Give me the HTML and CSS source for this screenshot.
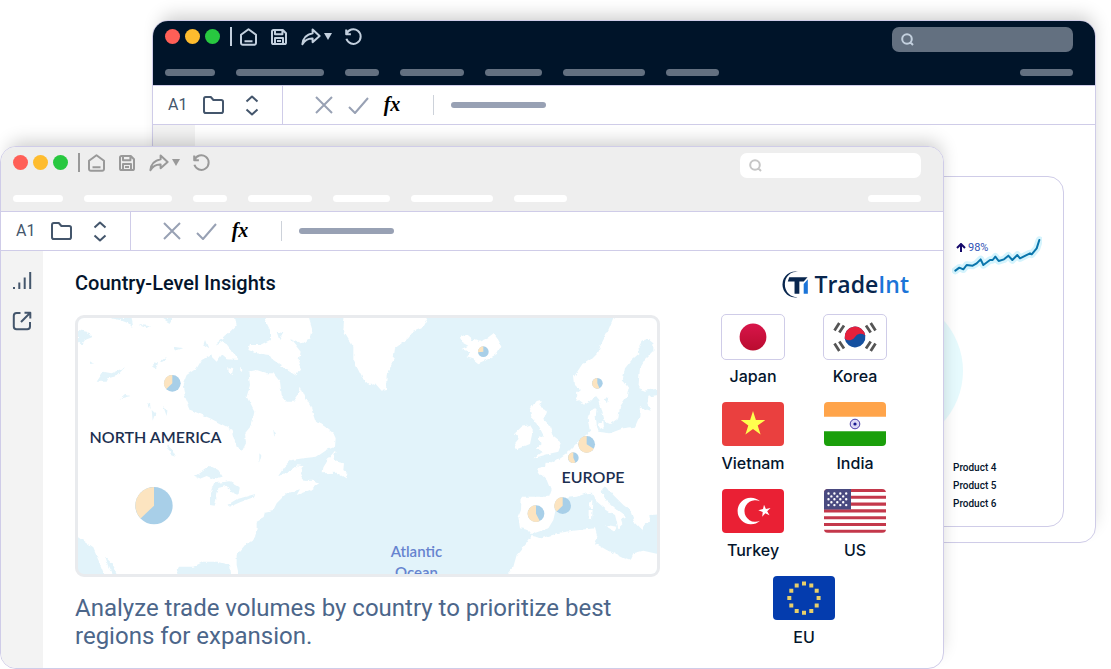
FILE: index.html
```html
<!DOCTYPE html>
<html lang="en">
<head>
<meta charset="utf-8">
<meta name="viewport" content="width=device-width, initial-scale=1">
<title>TradeInt – Country-Level Insights</title>
<link rel="stylesheet" href="styles.css">
</head>
<body>
<svg class="sprite" aria-hidden="true">
  <symbol id="i-home" viewBox="0 0 17 18"><path d="M1 6.8 8.5 1.2 16 6.8V15a1.8 1.8 0 0 1-1.8 1.8H2.8A1.8 1.8 0 0 1 1 15ZM4.5 13.2h8"/></symbol>
  <symbol id="i-save" viewBox="0 0 16 16"><path d="M1 2.6C1 1.7 1.7 1 2.6 1h9.2L15 4.2v9.2c0 .9-.7 1.6-1.6 1.6H2.6C1.7 15 1 14.3 1 13.4ZM4 1v4.2h7.4V1M4 15V9h8v6M6 12h4"/></symbol>
  <symbol id="i-share" viewBox="0 0 20 18"><path d="M11.6 1.6 18.6 8l-7 6.2v-3.6C7 10.400 3.700 12.500 1.400 16.200 2 11 4.600 6.600 11.600 5.300Z"/></symbol>
  <symbol id="i-undo" viewBox="0 0 17 17"><path d="M1.200 1.500v4.700h4.700M1.500 6A7.300 7.300 0 1 1 1.400 10.800"/></symbol>
  <symbol id="i-search" viewBox="0 0 13 13"><path d="M10.800 6a4.800 4.800 0 1 1-9.600 0 4.800 4.800 0 0 1 9.600 0ZM9.300 9.300 12 12"/></symbol>
  <symbol id="i-folder" viewBox="0 0 21 18"><path d="M1 3c0-1.200.6-2 1.800-2h5l2.600 3h7.800C19.400 4 20 4.700 20 5.800v9.400c0 1.100-.7 1.800-1.800 1.800H2.800C1.700 17 1 16.300 1 15.200Z"/></symbol>
  <symbol id="i-updown" viewBox="0 0 14 21"><path d="M1.500 6.500 7 1.500l5.500 5M1.500 14.500 7 19.500l5.500-5"/></symbol>
  <symbol id="i-close" viewBox="0 0 18 18"><path d="m1 1 16 16M17 1 1 17"/></symbol>
  <symbol id="i-check" viewBox="0 0 21 17"><path d="m1 10 6 6L20 1"/></symbol>
  <symbol id="i-bars" viewBox="0 0 20 19"><path d="M2 16v2M7.300 11.500V18M12.700 6.500V18M18.200 1v17"/></symbol>
  <symbol id="i-external" viewBox="0 0 20 20"><path d="M8.500 2H4.600A2.800 2.800 0 0 0 1.800 4.800v10.600a2.800 2.800 0 0 0 2.800 2.800h10.600a2.800 2.800 0 0 0 2.800-2.800V11M12.500 1.800h5.800v5.800M18 2 9 11"/></symbol>
</svg>

<main class="desktop">
  <section class="window window--back" aria-label="Product window">
    <header class="titlebar">
      <div class="titlebar__row">
        <div class="tools">
          <span class="dot dot--red"></span><span class="dot dot--yellow"></span><span class="dot dot--green"></span>
          <span class="tools__rule"></span>
          <button class="tool tool--home" aria-label="Home"><svg><use href="#i-home"/></svg></button>
          <button class="tool tool--save" aria-label="Save"><svg><use href="#i-save"/></svg></button>
          <button class="tool tool--share" aria-label="Share"><svg><use href="#i-share"/></svg><span class="caret"></span></button>
          <button class="tool tool--undo" aria-label="Undo"><svg><use href="#i-undo"/></svg></button>
        </div>
        <label class="search"><svg><use href="#i-search"/></svg><input type="search" aria-label="Search"></label>
      </div>
      <div class="menu" aria-hidden="true">
        <span class="pill pill--50"></span><span class="pill pill--88"></span><span class="pill pill--34"></span><span class="pill pill--64"></span><span class="pill pill--57"></span><span class="pill pill--82"></span><span class="pill pill--53"></span><span class="pill pill--53 pill--end"></span>
      </div>
    </header>
    <div class="cellbar">
      <div class="cellbar__cell">
        <span class="cellbar__name">A1</span>
        <button class="tool tool--folder" aria-label="Open folder"><svg><use href="#i-folder"/></svg></button>
        <button class="tool tool--updown" aria-label="Change cell"><svg><use href="#i-updown"/></svg></button>
      </div>
      <div class="cellbar__formula">
        <button class="tool tool--close" aria-label="Cancel"><svg><use href="#i-close"/></svg></button>
        <button class="tool tool--check" aria-label="Accept"><svg><use href="#i-check"/></svg></button>
        <button class="fx" aria-label="Insert function">fx</button>
        <span class="cellbar__value"></span>
      </div>
    </div>
    <div class="body">
      <nav class="rail" aria-label="Product views">
        <button class="tool tool--bars" aria-label="Charts"><svg><use href="#i-bars"/></svg></button>
        <button class="tool tool--external" aria-label="Open"><svg><use href="#i-external"/></svg></button>
      </nav>
      <div class="products">
        <h2 class="title">Product Category Insights</h2>
        <div class="card">
          <div class="kpi">
            <svg class="kpi__line" viewBox="96 228 270 120" aria-hidden="true">
              <path class="kpi__glow" d="M106 332 118 323 130 328 140 315 158 317 170 310 182 298 190 315 210 300 218 300 226 290 236 303 252 298 265 287 277 300 292 285 300 295 330 280 335 283 350 265 358 240"/>
              <path class="kpi__stroke" d="M106 332 118 323 130 328 140 315 158 317 170 310 182 298 190 315 210 300 218 300 226 290 236 303 252 298 265 287 277 300 292 285 300 295 330 280 335 283 350 265 358 240"/>
            </svg>
            <p class="kpi__text"><svg class="kpi__arrow" viewBox="0 0 10 10" aria-hidden="true"><path d="M5 9V1.500M1 5l4-4 4 4"/></svg>98%</p>
          </div>
          <div class="disc"></div>
          <ul class="legend"><li>Product 4</li><li>Product 5</li><li>Product 6</li></ul>
        </div>
      </div>
    </div>
  </section>

  <section class="window window--front" aria-label="Country window">
    <header class="titlebar">
      <div class="titlebar__row">
        <div class="tools">
          <span class="dot dot--red"></span><span class="dot dot--yellow"></span><span class="dot dot--green"></span>
          <span class="tools__rule"></span>
          <button class="tool tool--home" aria-label="Home"><svg><use href="#i-home"/></svg></button>
          <button class="tool tool--save" aria-label="Save"><svg><use href="#i-save"/></svg></button>
          <button class="tool tool--share" aria-label="Share"><svg><use href="#i-share"/></svg><span class="caret"></span></button>
          <button class="tool tool--undo" aria-label="Undo"><svg><use href="#i-undo"/></svg></button>
        </div>
        <label class="search"><svg><use href="#i-search"/></svg><input type="search" aria-label="Search"></label>
      </div>
      <div class="menu" aria-hidden="true">
        <span class="pill pill--50"></span><span class="pill pill--88"></span><span class="pill pill--34"></span><span class="pill pill--64"></span><span class="pill pill--57"></span><span class="pill pill--82"></span><span class="pill pill--53"></span><span class="pill pill--53 pill--end"></span>
      </div>
    </header>
    <div class="cellbar">
      <div class="cellbar__cell">
        <span class="cellbar__name">A1</span>
        <button class="tool tool--folder" aria-label="Open folder"><svg><use href="#i-folder"/></svg></button>
        <button class="tool tool--updown" aria-label="Change cell"><svg><use href="#i-updown"/></svg></button>
      </div>
      <div class="cellbar__formula">
        <button class="tool tool--close" aria-label="Cancel"><svg><use href="#i-close"/></svg></button>
        <button class="tool tool--check" aria-label="Accept"><svg><use href="#i-check"/></svg></button>
        <button class="fx" aria-label="Insert function">fx</button>
        <span class="cellbar__value"></span>
      </div>
    </div>
    <div class="body">
      <nav class="rail" aria-label="Country views">
        <button class="tool tool--bars" aria-label="Charts"><svg><use href="#i-bars"/></svg></button>
        <button class="tool tool--external" aria-label="Open"><svg><use href="#i-external"/></svg></button>
      </nav>
      <div class="countries">
        <div class="insight">
          <h1 class="title">Country-Level Insights</h1>
          <div class="map">
            <svg class="map__art" viewBox="24 24 1737 768" aria-hidden="true">
              <defs>
                <filter id="coast" x="-5%" y="-5%" width="110%" height="110%">
                  <feTurbulence type="fractalNoise" baseFrequency=".06" numOctaves="2" seed="4"/>
                  <feDisplacementMap in="SourceGraphic" scale="12" xChannelSelector="R" yChannelSelector="G"/>
                </filter>
              </defs>
              <g filter="url(#coast)">
                <g class="land">
                  <path d="M0 0H490L500 45 470 75 440 100 432 130 395 150 380 175 350 195 338 225 345 260 362 300 385 310 420 325 470 350 485 360 490 380 500 410 515 425 528 400 525 370 545 345 553 305 530 260 540 225 535 185 560 180 590 190 610 190 630 215 635 255 650 275 670 275 685 255 692 230 705 260 722 290 735 330 765 350 790 370 797 385 795 410 770 420 740 440 700 445 665 450 640 475 625 498 655 485 685 462 705 470 690 490 700 512 730 510 747 520 720 540 680 555 690 538 650 550 620 580 610 600 585 605 580 625 560 635 560 655 555 685 525 705 500 735 500 765 510 810H485L480 765 440 755 400 755 370 770 330 770 308 810H150L125 760 105 740 115 770 135 810H110L85 750 70 715 15 675Z"/>
                  <path d="M797 420 780 440 760 470 758 490 800 488 827 505 832 490 820 480 822 460 800 455 790 448Z"/>
                  <path d="M570 0H710L728 60 722 85 695 100 660 85 692 125 685 155 692 175 680 195 640 170 610 150 600 135 560 130 535 120 540 105 570 105 600 90 600 60 590 40Z"/>
                  <path d="M435 105 460 92 485 125 505 150 470 148 455 135 440 155 425 140ZM472 172 490 175 485 195 473 185ZM510 172 520 175 512 190Z"/>
                  <path d="M825 0 820 60 850 110 850 150 875 200 898 222 915 220 935 242 948 240 950 195 960 175 970 150 975 115 1015 85 1030 65 1055 55 1085 0Z"/>
                  <path d="M1170 82 1190 72 1205 85 1202 95 1215 90 1230 95 1255 85 1272 72 1285 90 1294 107 1280 132 1255 147 1225 160 1210 148 1190 142 1200 127 1175 117 1195 107 1175 97Z"/>
                  <path d="M1640 0H1790V232L1725 242 1705 235 1710 175 1725 150 1750 125 1750 100 1735 88 1715 92 1705 110 1708 130 1685 150 1665 175 1658 210 1675 235 1670 260 1650 290 1645 325 1620 342 1605 335 1595 300 1588 270 1578 258 1560 275 1540 285 1520 270 1518 250 1530 240 1515 225 1512 200 1535 165 1560 150 1580 130 1595 100 1615 60Z"/>
                  <path d="M1790 250 1735 260 1732 280 1742 302 1710 292 1708 320 1695 350 1660 355 1620 370 1585 365 1580 345 1577 318 1580 294 1560 302 1553 325 1560 365 1540 380 1520 400 1495 425 1460 450 1445 460 1430 458 1428 468 1400 475 1410 490 1430 510 1442 540 1435 560 1355 560 1353 600 1345 620 1350 655 1375 660 1385 672 1405 665 1435 655 1450 630 1458 595 1480 565 1520 560 1550 550 1565 548 1575 570 1610 600 1635 615 1645 655 1660 640 1655 625 1668 620 1640 600 1610 575 1595 545 1605 525 1630 555 1660 585 1680 600 1695 640 1720 665 1725 640 1740 635 1738 615 1790 612Z"/>
                  <path d="M1280 830 1330 770 1340 735 1370 700 1385 678 1415 685 1460 670 1510 662 1575 655 1582 680 1575 700 1610 720 1660 745 1680 752 1690 730 1720 722 1790 738V830Z"/>
                  <path d="M1395 275 1415 270 1410 290 1432 300 1420 330 1440 350 1450 380 1475 400 1465 425 1435 432 1390 445 1415 425 1397 415 1415 400 1405 385 1420 375 1402 340 1385 325 1380 300Z"/>
                  <path d="M1355 350 1380 345 1389 360 1380 402 1340 418 1335 400 1347 385 1335 370Z"/>
                  <path d="M1605 645 1642 650 1636 664ZM1558 576 1567 570 1566 595 1559 594ZM1556 600 1568 600 1566 628 1556 626ZM1585 338 1600 332 1602 352 1590 356Z"/>
                </g>
                <g class="lake">
                  <path d="M375 500 400 482 420 468 445 480 458 500 430 507 410 498 390 506ZM432 520 480 514 510 530 505 556 482 545 470 527 445 534 440 560 434 587 420 585 420 550ZM472 585 500 568 556 552 550 562 510 577 480 590Z"/>
                  <path d="M80 215 100 185 125 190 165 172 140 198 115 205 110 215ZM24 60 50 65 66 82 45 90 35 105 24 95ZM148 270 165 255 185 258 160 264ZM120 24H185L190 55 175 40 150 30ZM250 157 264 160 258 175 250 170ZM270 155 290 140 282 158ZM232 280 240 275 242 298ZM280 290 292 300 290 318ZM245 300 256 310 248 332ZM290 405 305 415 318 440 305 435ZM275 24 310 28 300 40ZM620 65 640 70 628 90ZM60 152 72 160 62 162ZM310 110 340 115 315 122ZM205 45 240 48 230 54ZM405 90 415 115 400 105ZM610 362 618 370 612 380ZM568 430 574 436 568 458ZM1602 265 1615 262 1610 280Z"/>
                  <path d="M625 498 650 470 690 450 720 458 740 445 775 425 770 455 755 480 745 512 705 512 690 490 702 468 680 466 655 485Z"/>
                </g>
              </g>
              <g class="pies">
                <g transform="translate(307 220) scale(25)"><circle r="1"/><path d="M0 0V-1A1 1 0 0 0-.72.69Z"/></g>
                <g transform="translate(252 587) scale(56)"><circle r="1"/><path d="M0 0V-1A1 1 0 0 0-.72.69Z"/></g>
                <g transform="translate(1240 125) scale(16)"><circle r="1"/><path d="M0 0V-1A1 1 0 0 0-1 .1Z"/></g>
                <g transform="translate(1582 220) scale(16)"><circle r="1"/><path d="M0 0V-1A1 1 0 1 0 .4.92Z"/></g>
                <g transform="translate(1550 403) scale(25)"><circle r="1"/><path d="M0 0V-1A1 1 0 1 0 .85.53Z"/></g>
                <g transform="translate(1510 443) scale(16)"><circle r="1"/><path d="M0 0V-1A1 1 0 1 0 .4.92Z"/></g>
                <g transform="translate(1398 611) scale(25)"><circle r="1"/><path d="M0 0V-1A1 1 0 1 0 .45.89Z"/></g>
                <g transform="translate(1478 587) scale(25)"><circle r="1"/><path d="M0 0V-1A1 1 0 0 0-.72.69Z"/></g>
              </g>
            </svg>
            <span class="map__label map__label--na">NORTH AMERICA</span>
            <span class="map__label map__label--eu">EUROPE</span>
            <span class="map__label map__label--sea">Atlantic<br>Ocean</span>
          </div>
          <p class="lead">Analyze trade volumes by country to prioritize best regions for expansion.</p>
        </div>
        <aside class="partners">
          <div class="logo">
            <svg class="logo__mark" viewBox="0 0 28 28" aria-hidden="true">
              <path class="logo__navy" d="M17 .8A13.300 13.300 0 0 0 .5 14 13.300 13.300 0 0 0 16 27.300 13 13 0 0 1 3 14 12.600 12.600 0 0 1 17 .8Z"/>
              <path class="logo__navy" d="M7.500 6.500H26.500L22.500 11H18V23.500H13V11H6Z"/>
              <path class="logo__blue" d="M22.500 13.500 26.800 8.500V23.500H22.500Z"/>
            </svg>
            <span class="logo__text">Trade<b>Int</b></span>
          </div>
          <ul class="flags">
            <li class="flag"><span class="flag__frame flag__frame--lined"><svg viewBox="0 0 62 44" aria-hidden="true"><defs><linearGradient id="jp" x2="0" y2="1"><stop stop-color="#d8154a"/><stop offset="1" stop-color="#ba0c2f"/></linearGradient></defs><circle cx="31" cy="22" r="13.400" fill="url(#jp)"/></svg></span>Japan</li>
            <li class="flag"><span class="flag__frame flag__frame--lined"><svg viewBox="0 0 62 44" aria-hidden="true"><g transform="rotate(-8 31 22)"><circle cx="31" cy="22" r="10.400" fill="#1450a0"/><path d="M20.600 22a10.400 10.400 0 0 1 20.800 0 6.500 6.500 0 0 0-10.400 0 6.500 6.500 0 0 1-10.400 0Z" fill="#e6203c"/></g><path stroke="#555" stroke-width="2.800" d="m10.500 15.500 4.800-7.500M15.300 17.500l4.700-7M51.500 15.500 46.700 8M46.700 17.500l-4.700-7M10.500 28.500l4.800 7.500M15.300 26.500l4.700 7M51.500 28.500 46.700 36M46.700 26.500l-4.700 7"/></svg></span>Korea</li>
            <li class="flag"><span class="flag__frame"><svg viewBox="0 0 62 44" aria-hidden="true"><path fill="#ea403f" d="M0 0h62v44H0z"/><path fill="#fffe4e" d="m31 9 2.900 9 9.400.1-7.600 5.500 2.900 9L31 27l-7.600 5.600 2.900-9-7.600-5.500 9.400-.1Z"/></svg></span>Vietnam</li>
            <li class="flag"><span class="flag__frame"><svg viewBox="0 0 62 44" aria-hidden="true"><path fill="#fff" d="M0 0h62v44H0z"/><path fill="#ffa44a" d="M0 0h62v14.700H0z"/><path fill="#1a9f0b" d="M0 29.300h62V44H0z"/><circle cx="31" cy="22" r="4.800" fill="#dcd9f5" stroke="#4a3fa8"/><circle cx="31" cy="22" r="1.600" fill="#181a8f"/></svg></span>India</li>
            <li class="flag"><span class="flag__frame"><svg viewBox="0 0 62 44" aria-hidden="true"><path fill="#ea2034" d="M0 0h62v44H0z"/><path fill="#fff" d="M38 12.300A13.300 13.300 0 1 0 38 31.700 10.800 10.800 0 1 1 38 12.300ZM42 15.700l1.900 4.200 4.600-.8-3.300 3.200 2.300 4-4.200-2-3.100 3.500.5-4.700-4.400-1.900 4.700-1.100Z"/></svg></span>Turkey</li>
            <li class="flag"><span class="flag__frame"><svg viewBox="0 0 62 44" aria-hidden="true"><path fill="#fff" d="M0 0h62v44H0z"/><path stroke="#c4384b" stroke-width="3.100" d="M0 1.500h62M0 8.300h62M0 15.100h62M0 21.900h62M0 28.700h62M0 35.500h62M0 42.300h62"/><path fill="#494a80" d="M0 0h27v20.500H0z"/><path fill="none" stroke="#fff" stroke-width="2.400" stroke-linecap="round" stroke-dasharray="0 5.900" d="M4.500 4.500H25M7.400 7.400H24M4.500 10.300H25M7.400 13.200H24M4.500 16.100H25"/></svg></span>US</li>
            <li class="flag flag--wide"><span class="flag__frame"><svg viewBox="0 0 62 44" aria-hidden="true"><path fill="#043cae" d="M0 0h62v44H0z"/><path fill="#e9cf6a" d="M29 5.500h4v4h-4zM36.300 7.400h4v4h-4zM41.700 12.800h4v4h-4zM43.600 20.100h4v4h-4zM41.700 27.500h4v4h-4zM36.300 32.900h4v4h-4zM29 34.800h4v4h-4zM21.700 32.900h4v4h-4zM16.300 27.500h4v4h-4zM14.300 20.100h4v4h-4zM16.300 12.800h4v4h-4zM21.700 7.400h4v4h-4z"/></svg></span>EU</li>
          </ul>
        </aside>
      </div>
    </div>
  </section>
</main>
</body>
</html>
```
FILE: styles.css
```css
* { box-sizing: border-box; }
html, body { margin: 0; background: #fff; }
body { font-family: Roboto, "Liberation Sans", sans-serif; color: #04152c; }
h1, h2, p, ul { margin: 0; padding: 0; }
ul { list-style: none; }
svg { display: block; }
button { margin: 0; padding: 0; border: 0; background: none; font: inherit; color: inherit; cursor: pointer; }
.sprite { position: absolute; width: 0; height: 0; }

/* Both windows share one grid cell and overlap through their margins. */
.desktop { display: grid; align-items: start; overflow: hidden; }
.window {
  grid-area: 1 / 1;
  min-width: 0;
  border: 1px solid #cfcce8;
  border-radius: 16px;
  background: #fff;
  box-shadow: 3px -10px 18px -6px rgba(0, 0, 0, .2);
}
.window--back { margin: 20px 15px 0 152px; }
.window--front { margin: 146px 167px 0 0; }

.titlebar {
  padding: 6px 22px 9px 12px;
  border-bottom: 1px solid #cfcce8;
  border-radius: 15px 15px 0 0;
}
.window--back .titlebar { background: #001429; color: #c3d0de; }
.window--front .titlebar { background: #eee; color: #999; }
.titlebar__row { display: flex; justify-content: space-between; align-items: flex-start; }
.tools { display: flex; align-items: center; height: 19px; }
.dot { width: 15px; height: 15px; margin-right: 5px; border-radius: 50%; }
.dot--red { background: #ff5f57; }
.dot--yellow { background: #febc2e; }
.dot--green { background: #28c840; }
.tools__rule { width: 2px; height: 19px; margin: 0 8px 0 5px; background: currentColor; }

.tool { display: flex; align-items: center; }
.tool svg { fill: none; stroke: currentColor; stroke-width: 2; stroke-linejoin: round; }
.tool--home svg { width: 17px; height: 18px; }
.tool--save { margin-left: 14px; }
.tool--save svg { width: 16px; height: 16px; }
.tool--share { margin-left: 14px; }
.tool--share svg { width: 20px; height: 18px; }
.tool--undo { margin-left: 13px; }
.tool--undo svg { width: 17px; height: 17px; }
.caret {
  margin-left: 3px;
  border: solid transparent;
  border-width: 7px 4px 0;
  border-top-color: currentColor;
}

.search {
  display: flex;
  align-items: center;
  width: 181px;
  height: 25px;
  padding: 0 9px;
  border-radius: 7px;
  background: #fff;
}
.window--back .search { background: #637080; }
.search svg { flex: none; width: 13px; height: 13px; fill: none; stroke: #c6c6c6; stroke-width: 2; }
.window--back .search svg { stroke: #c3d0de; }
.search input { flex: 1; min-width: 0; height: 21px; padding: 0 6px; border: 0; outline: 0; background: none; font: inherit; font-size: 12px; color: inherit; }

.menu { display: flex; gap: 21px; margin-top: 17px; }
.pill { height: 7px; border-radius: 4px; background: #fff; }
.window--back .pill { background: #637080; }
.pill--50 { width: 50px; }
.pill--88 { width: 88px; }
.pill--34 { width: 34px; }
.pill--64 { width: 64px; }
.pill--57 { width: 57px; }
.pill--82 { width: 82px; }
.pill--53 { width: 53px; }
.pill--end { margin-left: auto; }

.cellbar { display: flex; height: 39px; border-bottom: 1px solid #cfcce8; color: #44566c; }
.cellbar__cell { display: flex; align-items: center; width: 130px; padding-left: 15px; border-right: 1px solid #cfcce8; }
.cellbar__name { width: 18px; font-size: 16px; line-height: 20px; }
.tool--folder { margin-left: 17px; }
.tool--folder svg { width: 21px; height: 18px; }
.tool--updown { margin-left: 21px; }
.tool--updown svg { width: 14px; height: 21px; }
.cellbar__formula { display: flex; align-items: center; padding-left: 32px; color: #98a1b4; }
.tool--close svg { width: 18px; height: 18px; }
.tool--check { margin-left: 15px; }
.tool--check svg { width: 21px; height: 17px; }
.fx { width: 20px; margin-left: 13px; padding-bottom: 3px; font: italic bold 20px/24px "Liberation Serif", serif; color: #000; }
.cellbar__value { display: flex; align-items: center; height: 20px; margin-left: 31px; padding-left: 17px; border-left: 1px solid #cdd2da; }
.cellbar__value::before { content: ""; width: 95px; height: 6px; border-radius: 3px; background: #98a1b4; }

.body { display: flex; }
.rail { flex: none; display: flex; flex-direction: column; align-items: center; gap: 21px; width: 42px; padding-top: 20px; background: #f3f3f3; border-radius: 0 0 0 15px; color: #44566c; }
.tool--bars svg { width: 20px; height: 19px; }
.tool--external svg { width: 20px; height: 20px; }
.title { font-size: 20px; line-height: 28px; font-weight: 500; }

.products { flex: 1; min-width: 0; padding: 15px 31px 15px 32px; }
.card {
  display: flex;
  flex-direction: column;
  align-items: flex-end;
  margin-top: 8px;
  padding: 59px 23px 13px;
  border: 1px solid #cfcce8;
  border-radius: 16px;
}
.kpi { display: grid; width: 88px; }
.kpi > * { grid-area: 1 / 1; }
.kpi__line { width: 90px; height: 40px; fill: none; stroke-linejoin: round; stroke-linecap: round; }
.kpi__glow { stroke: #d5f4fd; stroke-width: 22; }
.kpi__stroke { stroke: #0a75ac; stroke-width: 6; }
.kpi__text { display: flex; align-items: center; gap: 2px; height: 14px; margin: 5px 0 0 4px; font-size: 11px; line-height: 14px; font-weight: 400; color: #2f52b5; }
.kpi__arrow { width: 10px; height: 10px; fill: none; stroke: #15096b; stroke-width: 2; }
.disc { width: 152px; height: 152px; margin: 19px 77px 12px 0; border-radius: 50%; background: #e6fafd; }
.legend { width: 87px; font-size: 10px; line-height: 18px; font-weight: 500; }

.countries { flex: 1; min-width: 0; display: grid; grid-template-columns: minmax(0, 1fr) 207px; gap: 42px; padding: 18px 34px 18px 32px; }
.map { position: relative; margin-top: 18px; border: 3px solid #e9ebee; border-radius: 9px; overflow: hidden; background: #e2f3fa; }
.map__art { width: 100%; height: auto; }
.land { fill: #fff; }
.lake { fill: #e2f3fa; }
.pies circle { fill: #a8cfe8; }
.pies path { fill: #fce4c0; }
/* Place names are pinned to the map in percentages of its size. */
.map__label { position: absolute; font-family: Lato, sans-serif; font-size: 16px; line-height: 21px; font-weight: 600; color: #1c2f50; }
.map__label--na { left: 2%; top: 42%; }
.map__label--eu { left: 83.5%; top: 58%; }
.map__label--sea { left: 54%; top: 87%; font-size: 15px; text-align: center; color: #6683cf; }
.lead { margin-top: 17px; font-size: 24px; line-height: 28px; color: #4c668a; }

.logo { display: flex; align-items: center; justify-content: flex-end; gap: 5px; height: 30px; }
.logo__mark { width: 27px; height: 27px; }
.logo__navy { fill: #08264e; }
.logo__blue { fill: #1b74d8; }
.logo__text { font-family: "Open Sans", sans-serif; font-size: 23px; line-height: 30px; font-weight: 600; color: #08264e; }
.logo__text b { font-weight: 600; color: #1b74d8; }
.flags { display: grid; grid-template-columns: 102px 102px; row-gap: 15px; margin-top: 15px; }
.flag { display: flex; flex-direction: column; align-items: center; gap: 6px; font-family: Inter, sans-serif; font-size: 16px; line-height: 20px; font-weight: 500; }
.flag--wide { grid-column: 1 / -1; }
.flag__frame { padding: 1px; border-radius: 5px; overflow: hidden; }
.flag__frame svg { width: 62px; height: 44px; border-radius: 4px; }
.flag__frame--lined { padding: 0; border: 1px solid #cfcce8; }
```
